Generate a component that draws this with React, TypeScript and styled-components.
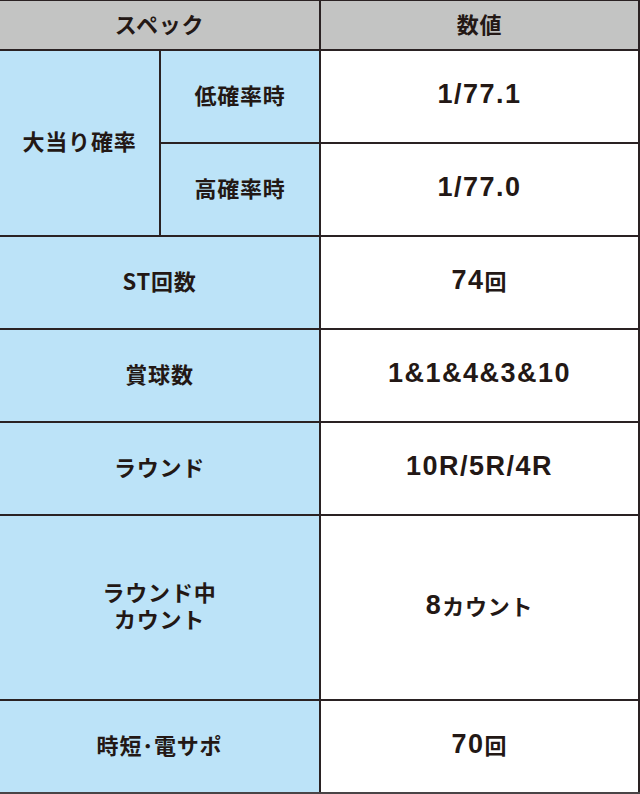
import React from "react";
import styled, { createGlobalStyle } from "styled-components";

const Global = createGlobalStyle`
  html, body { margin: 0; padding: 0; background: #fff; }
`;

const Table = styled.div`
  width: 640px;
  box-sizing: border-box;
  display: grid;
  grid-template-columns: 159px 158px 317px;
  grid-template-rows: 48px 91px 91px 91px 91px 91px 183px 91px;
  gap: 2px;
  padding: 1px 2px 0 0;
  border-bottom: 2px solid #4a4446;
  background: #2a2223;
  font-family: "Noto Sans CJK JP", "Noto Sans", sans-serif;
  color: #231815;
`;

const Cell = styled.div<{ $tone: "head" | "blue" | "white"; $col?: string; $row?: string }>`
  display: flex;
  align-items: center;
  justify-content: center;
  text-align: center;
  box-sizing: border-box;
  padding-bottom: ${(p) => (p.$tone === "head" ? "3px" : "5px")};
  font-weight: 700;
  font-size: 22px;
  line-height: 27px;
  letter-spacing: 0.8px;
  background: ${(p) => (p.$tone === "head" ? "#c3c4c3" : p.$tone === "blue" ? "#bce3f8" : "#ffffff")};
  ${(p) => (p.$col ? `grid-column: ${p.$col};` : "")}
  ${(p) => (p.$row ? `grid-row: ${p.$row};` : "")}
`;

const Num = styled.span`
  font-family: "Liberation Sans", Arial, sans-serif;
  font-weight: 700;
  font-size: 27px;
  letter-spacing: 1.5px;
`;

const Jp = styled.span`
  font-family: "Noto Sans CJK JP", sans-serif;
  font-weight: 700;
  font-size: 22px;
  letter-spacing: 0.8px;
`;

const rows: { label: React.ReactNode; value: React.ReactNode }[] = [
  { label: "ST回数", value: <><Num>74</Num><Jp>回</Jp></> },
  { label: "賞球数", value: <Num>1&amp;1&amp;4&amp;3&amp;10</Num> },
  { label: "ラウンド", value: <Num>10R/5R/4R</Num> },
  { label: <>ラウンド中<br />カウント</>, value: <><Num>8</Num><Jp>カウント</Jp></> },
  { label: "時短･電サポ", value: <><Num>70</Num><Jp>回</Jp></> },
];

export default function App() {
  return (
    <>
      <Global />
      <Table>
        <Cell $tone="head" $col="1 / 3">スペック</Cell>
        <Cell $tone="head">数値</Cell>

        <Cell $tone="blue" $row="2 / 4">大当り確率</Cell>
        <Cell $tone="blue">低確率時</Cell>
        <Cell $tone="white"><Num>1/77.1</Num></Cell>
        <Cell $tone="blue">高確率時</Cell>
        <Cell $tone="white"><Num>1/77.0</Num></Cell>

        {rows.map((r, i) => (
          <React.Fragment key={i}>
            <Cell $tone="blue" $col="1 / 3">{r.label}</Cell>
            <Cell $tone="white">{r.value}</Cell>
          </React.Fragment>
        ))}
      </Table>
    </>
  );
}
